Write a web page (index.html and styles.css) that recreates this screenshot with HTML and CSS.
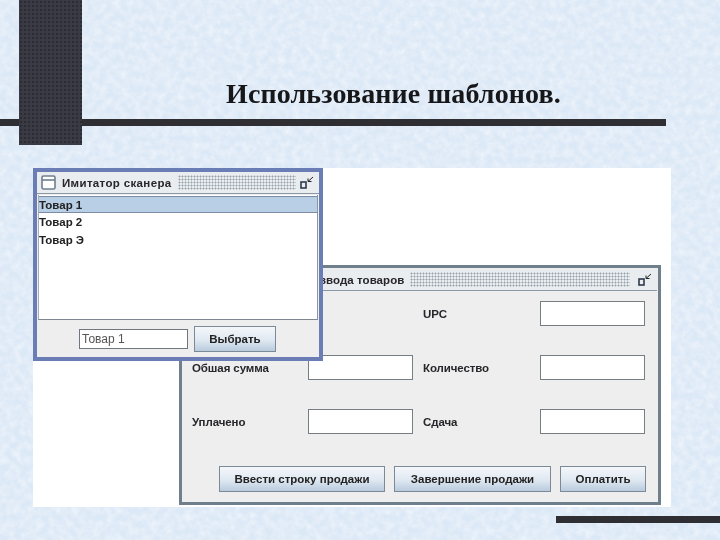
FILE: index.html
```
<!DOCTYPE html>
<html lang="ru">
<head>
<meta charset="utf-8">
<title>Использование шаблонов</title>
<link rel="stylesheet" href="styles.css">
</head>
<body>
<main class="slide">
  <svg class="texture" width="720" height="540" aria-hidden="true">
    <filter id="paper" x="0" y="0" width="100%" height="100%">
      <feTurbulence type="fractalNoise" baseFrequency="0.14" numOctaves="3" seed="7"/>
      <feColorMatrix type="matrix" values="0 0 0 0 0.97  0 0 0 0 0.98  0 0 0 0 1  0.9 0 0 0 -0.27"/>
    </filter>
    <rect width="720" height="540" filter="url(#paper)"/>
  </svg>
  <div class="hbar"></div>
  <div class="block"></div>
  <div class="footbar"></div>
  <h1 class="heading">Использование шаблонов.</h1>
  <div class="canvas"></div>

  <section class="window window-back">
    <header class="titlebar titlebar-back">
      <span class="title-text">ввода товаров</span>
      <span class="dots"></span>
      <svg class="resize" width="18" height="16" viewBox="0 0 18 16"><rect x="2" y="7" width="5" height="6" fill="none" stroke="#2c3a4a" stroke-width="1.6"/><path d="M14 2 9 6.5M9 3.5v3h3.5" fill="none" stroke="#222" stroke-width="1"/></svg>
    </header>
    <div class="form-body">
      <div class="form-grid">
        <span class="spacer"></span><span class="spacer"></span>
        <span class="label">UPC</span><span class="field"></span>
        <span class="label">Обшая сумма</span><span class="field"></span>
        <span class="label">Количество</span><span class="field"></span>
        <span class="label">Уплачено</span><span class="field"></span>
        <span class="label">Сдача</span><span class="field"></span>
      </div>
      <div class="form-actions">
        <button class="btn btn-enter">Ввести строку продажи</button>
        <button class="btn btn-finish">Завершение продажи</button>
        <button class="btn btn-pay">Оплатить</button>
      </div>
    </div>
  </section>

  <section class="window window-front">
    <header class="titlebar">
      <svg class="app-icon" width="16" height="16" viewBox="0 0 16 16"><rect x="1" y="1" width="13" height="13" rx="1.5" fill="#fff" stroke="#6f7f90" stroke-width="1.6"/><path d="M1 5h13" stroke="#6f7f90" stroke-width="1.6"/></svg>
      <span class="title-text title-front">Имитатор сканера</span>
      <span class="dots dots-front"></span>
      <svg class="resize" width="18" height="16" viewBox="0 0 18 16"><rect x="2" y="7" width="5" height="6" fill="none" stroke="#2c3a4a" stroke-width="1.6"/><path d="M14 2 9 6.5M9 3.5v3h3.5" fill="none" stroke="#222" stroke-width="1"/></svg>
    </header>
    <ul class="list">
      <li class="item item-selected">Товар 1</li>
      <li class="item">Товар 2</li>
      <li class="item">Товар Э</li>
    </ul>
    <div class="picker">
      <span class="picker-field">Товар 1</span>
      <button class="btn btn-choose">Выбрать</button>
    </div>
  </section>
</main>
</body>
</html>
```
FILE: styles.css
```
* { box-sizing: border-box; }
html, body { margin: 0; padding: 0; }
body { width: 720px; height: 540px; overflow: hidden; font-family: "Liberation Sans", Arial, sans-serif; }

.slide { position: relative; width: 720px; height: 540px; overflow: hidden; background: #dbe8f6; }
.texture { position: absolute; left: 0; top: 0; }

.hbar { position: absolute; left: 0; top: 119px; width: 666px; height: 7px; background: #2f2f33; }
.block {
  position: absolute; left: 19px; top: 0; width: 63px; height: 145px;
  background-color: #3a3a44;
  background-image: radial-gradient(circle at 2px 2px, #2b2b33 1px, transparent 1.5px);
  background-size: 4px 4px;
}
.footbar { position: absolute; left: 556px; top: 516px; width: 164px; height: 7px; background: #2f2f33; }
.heading {
  position: absolute; left: 226px; top: 79px; margin: 0;
  font: bold 28px/30px "Liberation Serif", "Times New Roman", serif;
  letter-spacing: 0.13px;
  color: #17171a; white-space: nowrap; filter: blur(0.3px);
}
.canvas { position: absolute; left: 33px; top: 168px; width: 638px; height: 339px; background: #fff; }

.window { position: absolute; display: flex; flex-direction: column; background: #eeeeee; filter: blur(0.3px); }
.window-front { left: 33px; top: 168px; width: 290px; height: 193px; border: 4px solid #6a7db4; }
.window-back { left: 179px; top: 265px; width: 482px; height: 240px; border: 3px solid #6f7f8c; padding: 1px; }

.titlebar { display: flex; align-items: center; height: 22px; flex: none; padding: 0 0 0 4px; background: #eaedf0; border-bottom: 1px solid #8b98a6; }
.titlebar-back { padding-left: 136px; }
.app-icon { flex: none; margin-right: 5px; }
.title-text { flex: none; font-size: 11.5px; font-weight: bold; letter-spacing: 0.05px; color: #26262b; white-space: nowrap; }
.title-front { letter-spacing: 0.35px; }
.dots {
  flex: 1; height: 15px; margin: 0 7px 0 6px;
  background-image: radial-gradient(circle, #98a1ab 0.9px, transparent 1.1px);
  background-size: 3px 3px;
}
.dots-front { margin-right: 3px; }
.resize { flex: none; margin: 0 2px 0 0; }

.list { flex: 1; margin: 1px 1px 0 1px; padding: 1px 0 0; list-style: none; background: #fff; border-bottom: 1px solid #7f8890; border-left: 1px solid #a4adb8; border-right: 1px solid #8c96a2; }
.item { height: 18px; font-size: 11.5px; font-weight: bold; line-height: 18px; color: #222; }
.item-selected { height: 17px; background: #b8cfe5; border-top: 1px solid #7d8ca4; border-bottom: 1px solid #7d8ca4; line-height: 16px; }

.picker { display: flex; align-items: center; justify-content: center; gap: 6px; flex: none; height: 37px; padding-right: 1px; }
.picker-field { width: 109px; height: 20px; padding-left: 2px; border: 1px solid #6f7880; background: #fff; font-size: 12px; line-height: 18px; color: #555; }

.btn {
  display: block; flex: none; padding: 0; height: 26px;
  border: 1px solid #7c8a98;
  background: linear-gradient(#f4f7fa, #dfe8f1 55%, #b9cbdd);
  font: bold 11.5px "Liberation Sans", Arial, sans-serif;
  color: #222;
}
.btn-choose { width: 82px; }
.btn-enter { width: 166px; }
.btn-finish { width: 157px; }
.btn-pay { width: 86px; }

.form-body { flex: 1; display: flex; flex-direction: column; padding: 10px 11px 0 9px; }
.form-grid { display: grid; grid-template-columns: 116px 115px 117px 105px; grid-auto-rows: 25px; row-gap: 29px; flex: none; }
.label { font-size: 11.5px; font-weight: bold; line-height: 27px; letter-spacing: -0.1px; color: #26262b; }
.field { display: block; width: 105px; background: #fff; border: 1px solid #757d85; }
.spacer { visibility: hidden; }
.form-actions { display: flex; gap: 9px; margin-top: 32px; padding-left: 27px; }
```
